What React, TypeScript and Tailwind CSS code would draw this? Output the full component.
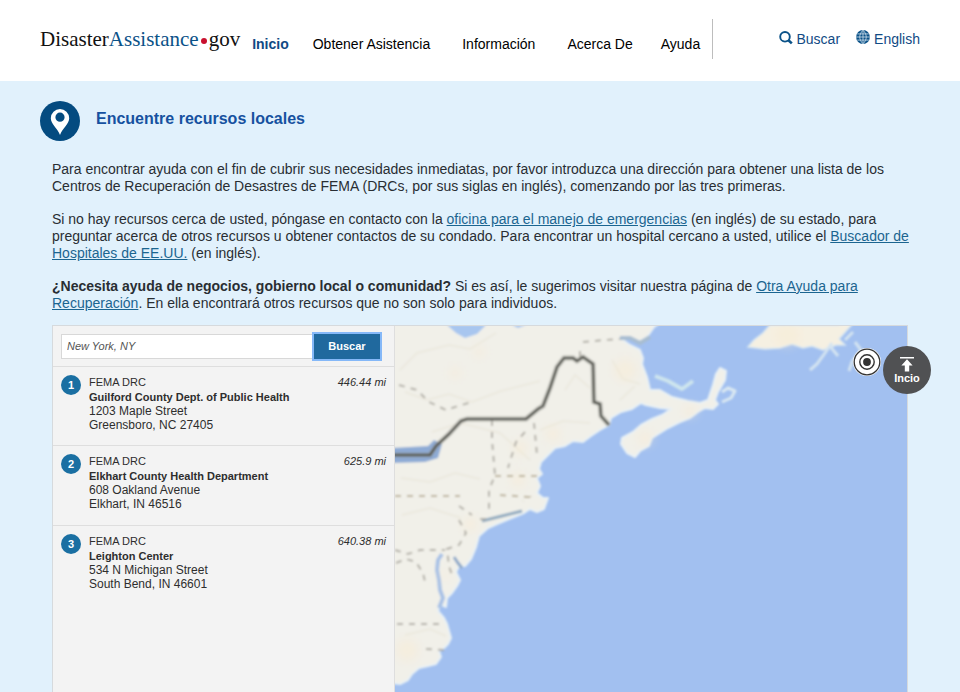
import React from "react";

const links = [
  { label: "Obtener Asistencia", gap: "ml-6" },
  { label: "Información", gap: "ml-8" },
  { label: "Acerca De", gap: "ml-8" },
  { label: "Ayuda", gap: "ml-7" },
];

const centers = [
  { name: "Guilford County Dept. of Public Health", street: "1203 Maple Street", city: "Greensboro, NC 27405", distance: "446.44 mi" },
  { name: "Elkhart County Health Department", street: "608 Oakland Avenue", city: "Elkhart, IN 46516", distance: "625.9 mi" },
  { name: "Leighton Center", street: "534 N Michigan Street", city: "South Bend, IN 46601", distance: "640.38 mi" },
];

function Header() {
  return (
    <header className="flex h-[81px] shrink-0 items-start bg-white px-10">
      <a href="#" className="mt-[25px] flex items-baseline font-['Liberation_Serif',serif] text-[21px] leading-7 text-[#111]">
        Disaster<span className="text-[#0b5288]">Assistance</span>
        <span className="mx-[2px] mt-1 size-[6px] self-center rounded-full bg-[#c8102e]" />
        gov
      </a>
      <nav className="ml-3 mt-[34px] flex text-sm text-black">
        <a href="#" className="font-bold text-[#114a84]">Inicio</a>
        {links.map((l) => (
          <a key={l.label} href="#" className={l.gap}>{l.label}</a>
        ))}
      </nav>
      <div className="ml-3 mt-[19px] h-10 w-px bg-[#bdbdbd]" />
      <div className="ml-auto mt-[29px] flex gap-4 text-sm text-[#114a84]">
        <a href="#" className="flex gap-1">
          <svg viewBox="0 0 14 14" className="mt-[2px] size-[14px]" fill="none" stroke="#0b5288" strokeWidth="1.9">
            <circle cx="6" cy="5.8" r="4.8" />
            <path d="M9.4 9.2 12.8 12.4" strokeWidth="2.6" />
          </svg>
          Buscar
        </a>
        <a href="#" className="flex gap-1">
          <svg viewBox="0 0 14 14" className="mt-px size-[14px]" fill="none">
            <circle cx="7" cy="7" r="6.9" fill="#0b5288" />
            <path d="M7 0V14M0 7H14M1.2 3.9H12.8M1.2 10.1H12.8M7 .3C2.7 4 2.7 10 7 13.7M7 .3C11.3 4 11.3 10 7 13.7" stroke="#cfe0ec" strokeWidth=".8" />
          </svg>
          English
        </a>
      </div>
    </header>
  );
}

function CoastMap() {
  return (
    <svg viewBox="395 326 512 366" preserveAspectRatio="xMinYMin slice" className="block h-full w-full" role="img" aria-label="Mapa">
      <defs>
        <filter id="soft" x="-5%" y="-5%" width="110%" height="110%"><feGaussianBlur stdDeviation="1" /></filter>
        <filter id="wide" x="-20%" y="-20%" width="140%" height="140%"><feGaussianBlur stdDeviation="5" /></filter>
      </defs>
      <rect x="395" y="326" width="512" height="900" fill="#a2c0f0" />
      <g filter="url(#soft)">
        <path d="M385 316H670L654 327 647 337 640 341 630 338 620 338 630 345 640 350 643 358 642 364 647 377 650 390 660 390 672 397 688 401 700 403 708 400 713 385 716 374 720 368 726 371 725 380 718 392 715 400 718 404 713 409 705 408 698 412 690 418 680 422 668 428 660 433 652 438 649 446 640 451 635 457 627 453 621 444 622 438 633 432 641 425 652 419 662 415 671 409 660 408 646 405 641 403 632 409 621 412 611 418 609 425 600 430 591 436 583 442 573 441 565 446 555 448 548 455 541 462 539 469 542 474 537 478 540 486 537 493 543 498 548 498 544 509 537 512 530 509 524 513 509 519 497 524 488 528 479 536 476 547 471 559 465 566 459 566 456 572 460 580 457 586 452 593 447 598 446 607 440 604 438 611 444 618 447 624 449 631 451 638 448 644 444 648 439 651 441 657 436 664 428 666 419 668 412 674 408 680 400 684 385 682Z" fill="#f1f0e9" stroke="#e9f1f5" strokeWidth="2" strokeLinejoin="round" />
        <path d="M722 392 728 388 735 391 731 398 722 402" fill="none" stroke="#dbe9f2" strokeWidth="3" strokeLinejoin="round" />
        <path d="M748 347 754 340 763 333 770 325H838L856 320 847 330 839 339 845 345 836 345 823 350 812 346 803 348 792 344 780 348 765 349Z" fill="#f5f0e2" stroke="#dce9f1" strokeWidth="1.5" />
        <path d="M832 343 825 353 817 364 810 370M845 340 853 332M855 342 861 350 852 362 849 371M829 345 838 356" fill="none" stroke="#d4e4f1" strokeWidth="3" />
        <path d="M655 376 668 381 682 389 693 381" fill="none" stroke="#cee5ee" strokeWidth="4" strokeLinejoin="round" />
        <path d="M447 325 456 333 465 338 477 334 486 325ZM512 325 518 328 526 325Z" fill="#a8c6ef" />
        <path d="M390 448 428 446 434 440 442 444 438 458 425 462 390 463Z" fill="#8eabd5" />
        <path d="M482 521 502 516 522 511" fill="none" stroke="#91abc1" strokeWidth="3" />
        <path d="M442 554 438 560 437 570 439 580 440 590 443 598 439 608" fill="none" stroke="#a9c2e6" strokeWidth="4" strokeLinejoin="round" />
        <path d="M454 557 458 563 462 568" fill="none" stroke="#8ea9c9" strokeWidth="3" />
        <path d="M620 338 630 338 640 343 650 337" fill="none" stroke="#a8bdd1" strokeWidth="4" />
        <g stroke="#ece9df" strokeWidth="2" fill="none">
          <path d="M400 370 417 353 449 345 470 349 496 333M405 392 427 400 449 394 472 402 501 391 540 381M432 432 460 423 500 433 530 460M401 478 430 482 455 473 480 479M402 515 430 508 461 518M405 635 430 629 446 636M540 430 563 421 590 423M565 390 575 375 590 388M612 360 623 379 640 384M620 400 635 386" />
        </g>
        <g fill="#f9ead0" opacity=".4" filter="url(#wide)">
          <circle cx="479" cy="352" r="6" /><circle cx="455" cy="373" r="6" /><circle cx="520" cy="448" r="8" />
          <circle cx="518" cy="480" r="8" /><circle cx="470" cy="524" r="8" /><circle cx="645" cy="438" r="8" />
          <circle cx="553" cy="434" r="8" /><circle cx="625" cy="370" r="12" /><circle cx="407" cy="650" r="12" />
          <circle cx="690" cy="411" r="7" /><circle cx="787" cy="335" r="12" /><circle cx="445" cy="575" r="5" />
        </g>
        <g fill="none" stroke="#aaa79f" strokeWidth="2" strokeDasharray="6 6" opacity=".85">
          <path d="M399 385 417 390 429 402 446 410 458 406 472 402" />
          <path d="M492 420V440L495 475 489 490 489 510M534 423 537 455M525 432 516 442 508 468" />
          <path d="M395 496H460M495 476 538 476M500 495 529 497 523 501" stroke="#b4aa91" />
          <path d="M459 506 472 515M459 520 466 533 459 545 447 549 449 566 453 578M480 519H493" />
          <path d="M395 550 408 554 420 550 445 550M396 563 406 559 416 562 423 573 426 586" />
          <path d="M397 624H444M426 649 444 650M583 342 605 340 620 339M580 357V348" />
        </g>
        <path d="M390 455H430L436 446 449 434 461 421 467 419H526L538 409 543 406 550 388 557 367 564 358 573 358 577 361 583 357 593 364 594 402 600 404 601 416 609 425" fill="none" stroke="#96968f" opacity=".5" strokeWidth="5" />
        <path d="M390 455H430L436 446 449 434 461 421 467 419H526L538 409 543 406 550 388 557 367 564 358 573 358 577 361 583 357 593 364 594 402 600 404 601 416 609 425" fill="none" stroke="#55564f" strokeWidth="2.5" />
      </g>
    </svg>
  );
}

function Locator() {
  return (
    <section className="relative mt-[13px] flex flex-1 border-x border-t border-[#d6dadd]">
      <div className="w-[342px] shrink-0 border-r border-[#dedede] bg-[#f3f3f3] text-[#2e2e2e]">
        <form className="flex h-10 items-center pl-2" onSubmit={(e) => e.preventDefault()}>
          <input aria-label="Ubicación" placeholder="New York, NY" className="h-[25px] w-[252px] border border-[#d8d8d8] bg-white px-[5px] text-[11px] italic outline-none placeholder:text-[#555]" />
          <button className="mx-px h-[25px] w-[66px] bg-[#20699e] text-[11px] font-bold text-white ring-2 ring-[#85b8f8]">Buscar</button>
        </form>
        <ol>
          {centers.map((c, i) => (
            <li key={c.name} className="flex h-[79px] border-t border-[#dedede] px-2 pt-2 even:h-20">
              <span className="mr-2 flex size-5 shrink-0 items-center justify-center rounded-full bg-[#1a6fa2] text-[11px] font-bold text-white">{i + 1}</span>
              <div className="flex-1 text-xs leading-[14px]">
                <div className="mb-px flex justify-between text-[11px] leading-[14px]">
                  <span>FEMA DRC</span>
                  <i>{c.distance}</i>
                </div>
                <strong className="block text-[11px] leading-[14px]">{c.name}</strong>
                <p>{c.street}</p>
                <p>{c.city}</p>
              </div>
            </li>
          ))}
        </ol>
      </div>
      <div className="min-w-0 flex-1 bg-[#a2c0f0]"><CoastMap /></div>
      <button aria-label="Centrar" className="absolute right-[26px] top-[22px] size-7">
        <svg viewBox="0 0 28 28" fill="none">
          <circle cx="14" cy="14" r="14" fill="#fff" />
          <circle cx="14" cy="14" r="12.8" stroke="#333" strokeWidth="1.3" />
          <circle cx="14" cy="14" r="7.2" stroke="#333" strokeWidth="1.4" />
          <circle cx="14" cy="14" r="3.9" fill="#333" />
        </svg>
      </button>
      <a href="#top" className="absolute -right-6 top-5 flex size-12 flex-col items-center rounded-full bg-[#505153] pt-[11px] text-[11px] font-bold leading-3 text-white">
        <svg viewBox="0 0 16 15" className="h-[15px] w-4" fill="#fff">
          <path d="M1 0H15V1.4H1ZM8 2.2 13.6 8.5H10.2V14.5H5.8V8.5H2.4Z" />
        </svg>
        Incio
      </a>
    </section>
  );
}

export default function App() {
  const a = "text-[#1b6590] underline";
  return (
    <div id="top" className="flex min-h-screen flex-col bg-[#e1f1fc] font-['Liberation_Sans',Arial,sans-serif]">
      <Header />
      <main className="flex flex-1 flex-col pl-10 pr-[52px]">
        <div className="mt-5 flex gap-4">
          <svg viewBox="0 0 40 40" className="size-10">
            <circle cx="20" cy="20" r="20" fill="#044b80" />
            <path fillRule="evenodd" d="M20 8A9.3 9.3 0 0 0 10.8 17.2C10.8 23 17.5 27 20 34 22.5 27 29.2 23 29.2 17.2A9.3 9.3 0 0 0 20 8ZM20 11.6A4.6 4.6 0 1 1 20 20.8 4.6 4.6 0 1 1 20 11.6Z" fill="#fff" />
          </svg>
          <h1 className="mt-1.5 text-base font-bold text-[#1651a0]">Encuentre recursos locales</h1>
        </div>
        <div className="ml-3 flex flex-1 flex-col text-sm leading-[17px] text-[#292e33]">
          <div className="-mr-3 mt-5 space-y-4">
            <p>Para encontrar ayuda con el fin de cubrir sus necesidades inmediatas, por favor introduzca una dirección para obtener una lista de los Centros de Recuperación de Desastres de FEMA (DRCs, por sus siglas en inglés), comenzando por las tres primeras.</p>
            <p>Si no hay recursos cerca de usted, póngase en contacto con la <a href="#" className={a}>oficina para el manejo de emergencias</a> (en inglés) de su estado, para preguntar acerca de otros recursos u obtener contactos de su condado. Para encontrar un hospital cercano a usted, utilice el <a href="#" className={a}>Buscador de Hospitales de EE.UU.</a> (en inglés).</p>
            <p><strong>¿Necesita ayuda de negocios, gobierno local o comunidad?</strong> Si es así, le sugerimos visitar nuestra página de <a href="#" className={a}>Otra Ayuda para Recuperación</a>. En ella encontrará otros recursos que no son solo para individuos.</p>
          </div>
          <Locator />
        </div>
      </main>
    </div>
  );
}
